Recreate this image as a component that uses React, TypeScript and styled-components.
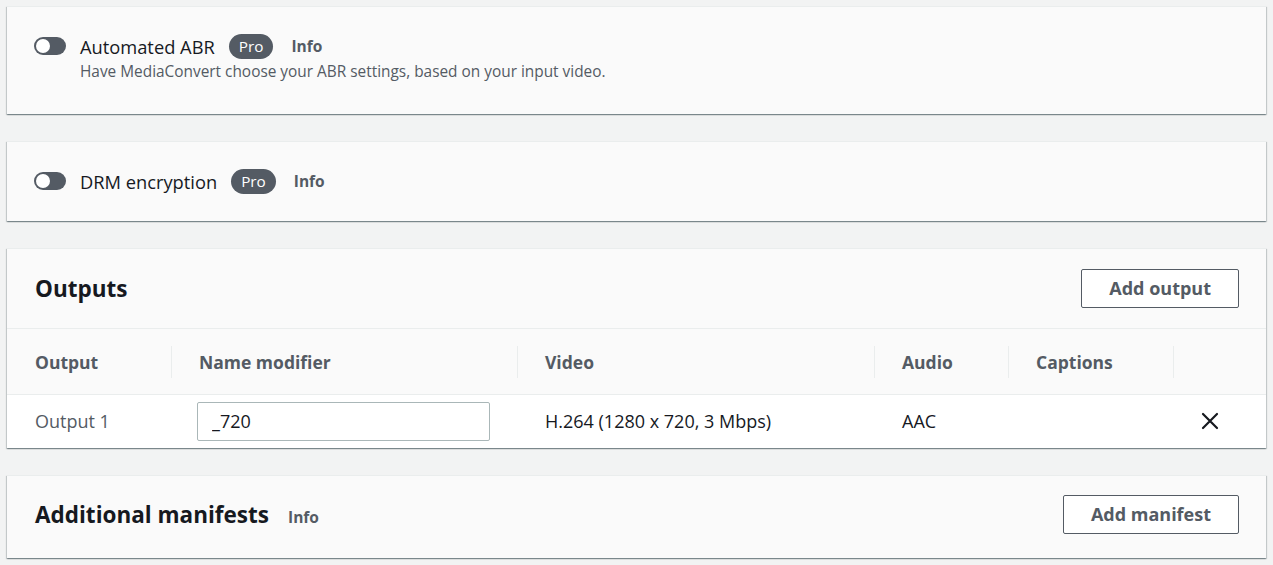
import React from 'react';
import styled, { createGlobalStyle } from 'styled-components';

const GlobalStyle = createGlobalStyle`
  html, body {
    margin: 0;
    padding: 0;
    background: #f2f3f3;
  }
  body {
    font-family: "Open Sans", "Noto Sans", Arial, sans-serif;
    color: #16191f;
  }
  * {
    box-sizing: border-box;
  }
`;

const Page = styled.div`
  display: flex;
  flex-direction: column;
  gap: 27px;
  padding: 6px 7px 7px;
`;

const Card = styled.section`
  background: #fafafa;
  border-top: 1px solid #eaeded;
  box-shadow: 0 1px 1px 0 rgba(0, 28, 36, 0.3), 1px 1px 1px 0 rgba(0, 28, 36, 0.15),
    -1px 1px 1px 0 rgba(0, 28, 36, 0.15);
`;

const ToggleCard = styled(Card)<{ $padBottom: number }>`
  padding: 27px 27px ${p => p.$padBottom}px;
`;

const TitleRow = styled.div`
  display: flex;
  align-items: center;
  height: 24px;
`;

const Toggle = styled.span`
  position: relative;
  display: inline-block;
  width: 32px;
  height: 18px;
  border-radius: 9px;
  background: #545b64;
  margin-right: 14px;
  flex-shrink: 0;

  &::after {
    content: '';
    position: absolute;
    top: 2px;
    left: 2px;
    width: 14px;
    height: 14px;
    border-radius: 50%;
    background: #fff;
  }
`;

const ToggleLabel = styled.span`
  font-size: 18.3px;
  color: #16191f;
  margin-right: 14px;
`;

const ProBadge = styled.span`
  display: inline-flex;
  align-items: center;
  height: 25px;
  padding: 0 10px;
  border-radius: 13px;
  background: #545b64;
  color: #fff;
  font-size: 15.3px;
  margin-right: 18px;
`;

const InfoLink = styled.span`
  font-size: 15.5px;
  font-weight: 700;
  color: #545b64;
`;

const Description = styled.div`
  margin-top: 4px;
  margin-left: 46px;
  font-size: 15.4px;
  line-height: 20px;
  color: #545b64;
`;

const Header = styled.div<{ $height: number; $shift?: number }>`
  display: flex;
  align-items: center;
  justify-content: space-between;
  height: ${p => p.$height}px;
  padding: 0 27px ${p => p.$shift ?? 0}px 28px;
`;

const HeaderTitle = styled.div`
  display: flex;
  align-items: baseline;
  gap: 19px;
`;

const H2 = styled.h2`
  margin: 0;
  font-size: 22.5px;
  font-weight: 700;
  color: #16191f;
`;

const Button = styled.button`
  height: 39px;
  padding: 0 27px;
  border: 1px solid #545b64;
  border-radius: 2px;
  background: #fff;
  color: #545b64;
  font-family: inherit;
  font-size: 18px;
  font-weight: 700;
  cursor: pointer;
`;

const Table = styled.table`
  width: 100%;
  border-collapse: collapse;
  table-layout: fixed;
`;

const Th = styled.th<{ $sep?: boolean }>`
  position: relative;
  height: 66px;
  padding: 0 0 0 28px;
  text-align: left;
  font-size: 17.5px;
  font-weight: 700;
  color: #545b64;
  border-top: 1px solid #eaeded;
  border-bottom: 1px solid #eaeded;

  &::before {
    content: '';
    display: ${p => (p.$sep ? 'block' : 'none')};
    position: absolute;
    left: 0;
    top: 17px;
    height: 32px;
    border-left: 1px solid #eaeded;
  }
`;

const Tr = styled.tr`
  background: #fff;
`;

const Td = styled.td<{ $muted?: boolean }>`
  height: 53px;
  padding: 0 0 0 28px;
  font-size: 18px;
  color: ${p => (p.$muted ? '#545b64' : '#16191f')};
`;

const NameInput = styled.input`
  width: 293px;
  height: 39px;
  margin-left: -2px;
  padding: 0 14px;
  border: 1px solid #aab7b8;
  border-radius: 2px;
  background: #fff;
  font-family: inherit;
  font-size: 18px;
  color: #16191f;
`;

const RemoveCell = styled.td`
  height: 53px;
  padding: 4px 0 0 28px;
`;

const CloseIcon = () => (
  <svg width="18" height="18" viewBox="0 0 18 18" fill="none" stroke="#16191f" strokeWidth="2.2" strokeLinecap="round">
    <path d="M2 2 L16 16 M16 2 L2 16" />
  </svg>
);

const columns = [
  { label: 'Output', width: 164 },
  { label: 'Name modifier', width: 346 },
  { label: 'Video', width: 357 },
  { label: 'Audio', width: 134 },
  { label: 'Captions', width: 165 },
  { label: '', width: 93 },
];

export default function App() {
  return (
    <>
      <GlobalStyle />
      <Page>
        <ToggleCard $padBottom={32}>
          <TitleRow>
            <Toggle />
            <ToggleLabel>Automated ABR</ToggleLabel>
            <ProBadge>Pro</ProBadge>
            <InfoLink>Info</InfoLink>
          </TitleRow>
          <Description>Have MediaConvert choose your ABR settings, based on your input video.</Description>
        </ToggleCard>

        <ToggleCard $padBottom={28}>
          <TitleRow>
            <Toggle />
            <ToggleLabel>DRM encryption</ToggleLabel>
            <ProBadge>Pro</ProBadge>
            <InfoLink>Info</InfoLink>
          </TitleRow>
        </ToggleCard>

        <Card>
          <Header $height={79} $shift={1}>
            <HeaderTitle>
              <H2>Outputs</H2>
            </HeaderTitle>
            <Button>Add output</Button>
          </Header>
          <Table>
            <colgroup>
              {columns.map((c, i) => (
                <col key={i} style={{ width: c.width }} />
              ))}
            </colgroup>
            <thead>
              <tr>
                {columns.map((c, i) => (
                  <Th key={i} $sep={i > 0}>
                    {c.label}
                  </Th>
                ))}
              </tr>
            </thead>
            <tbody>
              <Tr>
                <Td $muted>Output 1</Td>
                <Td>
                  <NameInput defaultValue="_720" />
                </Td>
                <Td>H.264 (1280 x 720, 3 Mbps)</Td>
                <Td>AAC</Td>
                <Td />
                <RemoveCell>
                  <CloseIcon />
                </RemoveCell>
              </Tr>
            </tbody>
          </Table>
        </Card>

        <Card>
          <Header $height={82} $shift={5}>
            <HeaderTitle>
              <H2>Additional manifests</H2>
              <InfoLink>Info</InfoLink>
            </HeaderTitle>
            <Button>Add manifest</Button>
          </Header>
        </Card>
      </Page>
    </>
  );
}
